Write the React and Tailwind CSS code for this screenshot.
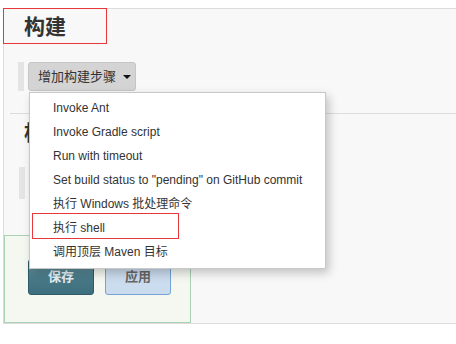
import React from "react";

const items = [
  "Invoke Ant",
  "Invoke Gradle script",
  "Run with timeout",
  'Set build status to "pending" on GitHub commit',
  "执行 Windows 批处理命令",
  "执行 shell",
  "调用顶层 Maven 目标",
];

export default function App() {
  return (
    <div
      className="w-[456px] h-[344px] bg-white overflow-hidden text-[#333]"
      style={{ fontFamily: '"Liberation Sans", "Noto Sans CJK SC", sans-serif' }}
    >
      <div className="ml-[3px] mt-[8px] h-[316px] bg-[#f8f8f8] border-t border-l border-b border-[#dcdcdc] flex flex-col">
        {/* section 1 heading with red highlight */}
        <div className="-mt-px -ml-px w-[104px] h-[36px] border border-[#e8373a] flex items-center pl-[20px]">
          <span className="text-[21px] font-bold leading-none text-[#333]">构建</span>
        </div>

        {/* add build step button row */}
        <div className="relative mt-[18px] flex items-stretch h-[29px]">
          <div className="ml-[14px] w-[6px] bg-[#e4e4e4]"></div>
          <div className="ml-[4px] w-[108px] h-[29px] bg-[#d4d4d4] border border-[#c6c6c6] rounded-[3px] flex items-center pl-[9px]">
            <span className="text-[13px] text-[#333] leading-none">增加构建步骤</span>
            <span className="ml-[7px] w-0 h-0 border-l-[4px] border-r-[4px] border-t-[4px] border-l-transparent border-r-transparent border-t-[#111]"></span>
          </div>

          {/* dropdown menu */}
          <div className="absolute left-[25px] top-[30px] z-10 w-[297px] bg-white border border-[#c8c8c8] shadow-[3px_4px_9px_rgba(0,0,0,0.22)] pt-[3px] pb-[4px]">
            {items.map((t) => (
              <div key={t} className="relative h-[24px] flex items-center pl-[23px] text-[12px] text-[#333] whitespace-nowrap">
                {t}
                {t === "执行 shell" && (
                  <div className="absolute left-[2px] top-[-3px] w-[147px] h-[26px] border border-[#e8373a]"></div>
                )}
              </div>
            ))}
          </div>
        </div>

        {/* divider */}
        <div className="mt-[22px] ml-[6px] border-t border-[#dcdcdc]"></div>

        {/* section 2 heading (mostly hidden behind the menu) */}
        <div className="mt-[4px] h-[28px] pl-[20px] flex items-center">
          <span className="text-[21px] font-bold leading-none text-[#333]">构建后操作</span>
        </div>

        {/* add post-build step row (hidden behind menu) */}
        <div className="mt-[21px] flex h-[32px]">
          <div className="ml-[15px] w-[6px] bg-[#e4e4e4]"></div>
          <div className="ml-[4px] w-[150px] bg-[#d4d4d4] border border-[#c6c6c6] rounded-[3px]"></div>
        </div>

        {/* save / apply panel */}
        <div className="mt-auto w-[187px] h-[88px] bg-[#f5f8f1] border border-[#a9d2b4] pt-[23px] pl-[23px] flex gap-[11px]">
          <div className="w-[66px] h-[36px] rounded-[3px] border border-[#2f5a68] bg-gradient-to-b from-[#6d9aa7] via-[#4a7a88] to-[#3d6e7d] flex items-center justify-center">
            <span className="text-[13px] font-bold text-[#e4eef0]">保存</span>
          </div>
          <div className="w-[66px] h-[36px] rounded-[3px] border border-[#74a3d8] bg-[#cbdcee] flex items-center justify-center">
            <span className="text-[13px] font-bold text-[#666]">应用</span>
          </div>
        </div>
      </div>
    </div>
  );
}
